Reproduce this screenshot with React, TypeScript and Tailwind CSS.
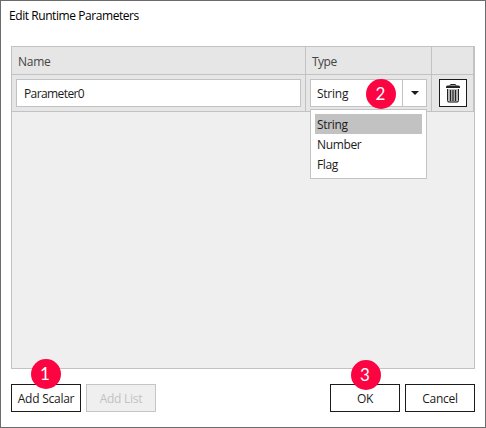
import type { ReactNode } from 'react';

function Badge({ children, className }: { children: ReactNode; className: string }) {
  return (
    <span
      className={`absolute flex h-[30px] w-[30px] items-center justify-center rounded-full bg-[#fc0341] pr-px pb-px font-['Lato',sans-serif] text-[17px] leading-none tracking-normal text-white ${className}`}
    >
      {children}
    </span>
  );
}

function TrashIcon() {
  return (
    <svg width="14" height="19" viewBox="0 0 14 19" fill="none">
      <path d="M4 1.500Q4 .5 5 .5h4q1 0 1 1" stroke="#222" />
      <path d="M0 4V3Q0 1.500 1.500 1.500h11Q14 1.500 14 3v1z" fill="#222" />
      <path d="M1 5h12v12q0 1.500-1.500 1.500h-9Q1 18.500 1 17z" fill="#bdbdbd" />
      <path d="M1.500 5v11.500q0 1.500 1.500 1.500h8q1.500 0 1.500-1.500V5" stroke="#222" />
      <path d="M4.500 6v11M7 6v11M9.500 6v11" stroke="#222" strokeWidth="1.200" />
    </svg>
  );
}

const options = ['String', 'Number', 'Flag'];

export default function App() {
  return (
    <div className="flex h-[428px] w-[486px] flex-col border border-[#6b6b6b] bg-white px-[10px] pb-[15px] font-['Open_Sans','Noto_Sans',sans-serif] text-[12px] leading-4 tracking-[-0.25px] text-[#1b1b1b]">
      <h1 className="-ml-[2px] h-[45px] pt-[7px] tracking-[-0.43px] text-black">Edit Runtime Parameters</h1>

      <div className="h-[323px] w-[464px] border border-[#c2c2c2] bg-[#efefef]">
        <div className="grid h-[65px] grid-cols-[294px_126px_42px] grid-rows-[28px_37px] bg-[#e6e6e6]">
          <div className="border-r border-b border-[#c2c2c2] pt-[7px] pl-[6px] text-[#444]">Name</div>
          <div className="border-r border-b border-[#c2c2c2] pt-[7px] pl-[6px] tracking-[-0.5px] text-[#444]">Type</div>
          <div className="border-r border-b border-[#c2c2c2]" />
          <div className="border-r border-b border-[#c2c2c2] p-1">
            <div className="flex h-7 w-[285px] items-center border border-[#c2c2c2] bg-white pt-px pl-[7px] tracking-[-0.6px]">
              Parameter0
            </div>
          </div>
          <div className="border-r border-b border-[#c2c2c2] p-1">
            <div className="relative flex h-7 w-[117px] border border-[#c2c2c2] bg-white">
              <span className="flex w-[92px] items-center border-r border-[#c2c2c2] pt-[2px] pl-[6px]">String</span>
              <span className="flex flex-1 items-center justify-center">
                <svg width="8" height="4" viewBox="0 0 8 4">
                  <path d="M0 0h8L4 4z" fill="#1b1b1b" />
                </svg>
              </span>
              <Badge className="top-[-1px] left-[55px]">2</Badge>
              <div className="absolute top-[29px] -left-px h-[70px] w-[117px] border border-[#c2c2c2] bg-white p-1">
                {options.map((option, i) => (
                  <div
                    key={option}
                    className={`flex h-5 items-center pt-[2px] pl-[2px] tracking-[-0.35px] ${i === 0 ? 'bg-[#c2c2c2]' : ''}`}
                  >
                    {option}
                  </div>
                ))}
              </div>
            </div>
          </div>
          <div className="border-r border-b border-[#c2c2c2] py-1 pl-[7px]">
            <div className="flex h-7 w-7 items-center justify-center border border-[#1b1b1b] bg-white">
              <TrashIcon />
            </div>
          </div>
        </div>
      </div>

      <div className="mt-[15px] flex h-7 justify-between">
        <div className="flex gap-[5px]">
          <div className="relative flex w-[70px] items-center justify-center whitespace-nowrap border border-[#1b1b1b] pt-[2px]">
            Add Scalar
            <Badge className="-top-[26px] left-[18.500px]">1</Badge>
          </div>
          <div className="flex w-[70px] items-center justify-center border border-[#c5c5c5] bg-[#efefef] pt-[2px] text-[#c2c2c2]">
            Add List
          </div>
        </div>
        <div className="flex gap-[5px]">
          <div className="relative flex w-[70px] items-center justify-center border border-[#1b1b1b] pt-[2px]">
            OK
            <Badge className="-top-[25px] left-[19.500px]">3</Badge>
          </div>
          <div className="flex w-[70px] items-center justify-center border border-[#1b1b1b] pt-[2px]">Cancel</div>
        </div>
      </div>
    </div>
  );
}
